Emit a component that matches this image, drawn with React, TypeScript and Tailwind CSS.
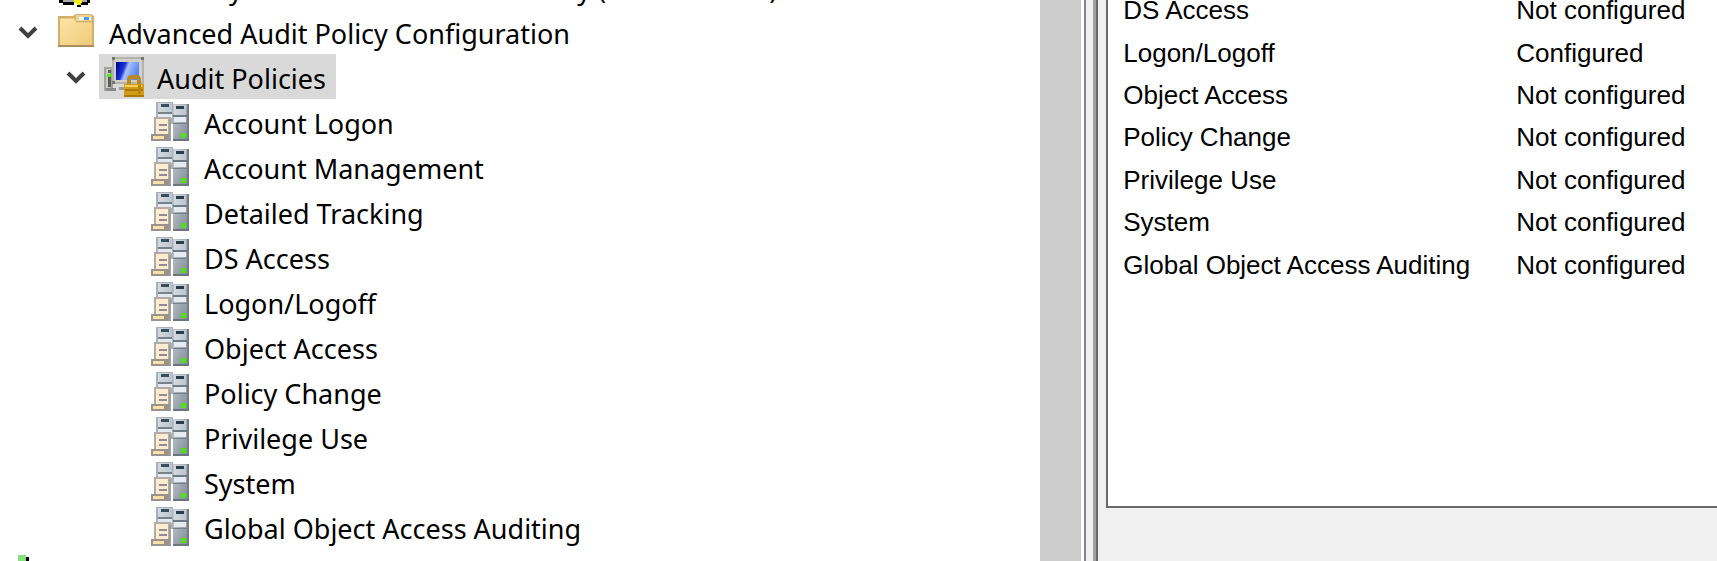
import type { ReactNode } from "react";

type Box = [number, number, number, number, string];

function Pixels({ boxes }: { boxes: Box[] }) {
  return (
    <svg viewBox="0 0 40 40" className="h-10 w-10 shrink-0" aria-hidden="true">
      {boxes.map(([x, y, w, h, fill], i) => (
        <rect key={i} x={x} y={y} width={w} height={h} fill={fill} />
      ))}
    </svg>
  );
}

function ServerIcon() {
  return (
    <svg viewBox="0 0 40 40" className="h-10 w-10 shrink-0" aria-hidden="true">
      <defs>
        <linearGradient id="cabinet" x1="0" y1="0" x2="1" y2="1">
          <stop offset="0" stopColor="#c3cad1" />
          <stop offset="1" stopColor="#7f8992" />
        </linearGradient>
        <linearGradient id="face" x1="0" y1="0" x2="1" y2="0">
          <stop offset="0" stopColor="#d3d9e0" />
          <stop offset="1" stopColor="#bcc5ce" />
        </linearGradient>
      </defs>
      <path d="M5 0h17v22H5z" fill="#a9b2ba" />
      <path d="M7 1h14v9H7z" fill="url(#face)" />
      <path d="M10 2h8v3h-8z" fill="#3a4d5a" />
      <path d="M7 10h14v2H7z" fill="#76828c" />
      <path d="M7 12h14v4H7z" fill="#e3e9ef" />
      <path d="M22 2h16v37H22z" fill="url(#cabinet)" />
      <path d="M23 3h12v10H23z" fill="url(#face)" />
      <path d="M25 4h8v3h-8z" fill="#2b3c48" />
      <path d="M22 13h14v2H22z" fill="#6e7a84" />
      <path d="M23 15h12v5H23z" fill="#e6ebf0" />
      <path d="M22 21h14v1H22z" fill="#75808a" />
      <path d="M36 2h2v37h-2z" fill="#757f88" />
      <path d="M22 37h16v2H22z" fill="#6b757d" />
      <path d="M30 31h5v5h-5z" fill="#4fe01a" />
      <path d="M3 15h17v22H3z" fill="#b3aca6" />
      <path d="M5 17h12v18H5z" fill="#fdecd0" />
      <path d="M8 22h8v2H8zM8 27h8v2H8z" fill="#928c96" />
      <path d="M0 32h18v7H0z" fill="#98938c" />
      <path d="M2 34h11v3H2z" fill="#fbe0a8" />
      <path d="M18 18h2v21h-2z" fill="#a39d97" />
    </svg>
  );
}

function FolderIcon() {
  return (
    <svg viewBox="0 0 40 40" className="h-10 w-10 shrink-0" aria-hidden="true">
      <defs>
        <linearGradient id="folder" x1="0" y1="0" x2="1" y2="1">
          <stop offset="0" stopColor="#fde5a5" />
          <stop offset="1" stopColor="#eecb7a" />
        </linearGradient>
      </defs>
      <path d="M2 4h15l3-2h15l3 2v31H2z" fill="#d3b06a" />
      <path d="M4 6h14l2 4h16V4v30H4z" fill="#e6c983" />
      <path d="M20 3h15l1 6H20z" fill="#eed596" />
      <path d="M23 5h12v3H23z" fill="#f5f8fb" />
      <path d="M28 5h5v3h-5z" fill="#4a9be0" />
      <path d="M4 7h14l3 4h15v22H4z" fill="url(#folder)" />
      <path d="M2 33h36v2H2z" fill="#ad8d5a" />
    </svg>
  );
}

function PolicyIcon() {
  return (
    <svg viewBox="0 0 40 40" className="h-10 w-10 shrink-0" aria-hidden="true">
      <defs>
        <linearGradient id="screen" x1="0" y1="0" x2="1" y2="0.3">
          <stop offset="0.1" stopColor="#0508a0" />
          <stop offset="0.4" stopColor="#1a35d8" />
          <stop offset="0.55" stopColor="#a9c2fb" />
          <stop offset="1" stopColor="#5b87f2" />
        </linearGradient>
      </defs>
      <path d="M0 10h9v24H0z" fill="#a2a39e" />
      <path d="M2 12h4v20H2z" fill="#c9cac4" />
      <path d="M4 13h3v3H4zM4 20h3v10H4z" fill="#5c5d5a" />
      <path d="M3 17h5v3H3z" fill="#55e51d" />
      <path d="M2 31h10v3H2z" fill="#898a86" />
      <path d="M8 0h32v27H8z" fill="#b4b3ac" />
      <path d="M10 2h28v23H10z" fill="#d0cfc8" />
      <path d="M8 0h3v3H8zM37 0h3v3h-3zM8 24h3v3H8z" fill="#777770" />
      <path d="M12 5h23v18H12z" fill="url(#screen)" />
      <path d="M15 30h5v3h-5z" fill="#9a9a96" />
      <path d="M25 29v-6q0-3 3-3h4q3 0 3 3v6" fill="none" stroke="#b98a22" strokeWidth="4" />
      <path d="M20 27h20v13H20z" fill="#d39c17" />
      <path d="M21 28h17v2H21z" fill="#f4cf5c" />
      <path d="M21 32h18v2H21zM20 38h20v2H20z" fill="#ad7909" />
      <path d="M34 28h3v9h-3z" fill="#b8860f" />
    </svg>
  );
}

function SecurityIcon() {
  return (
    <Pixels
      boxes={[
        [5, 30, 26, 5, "#a9a9a9"],
        [3, 33, 4, 3, "#000000"],
        [7, 35, 11, 3, "#000000"],
        [24, 35, 8, 3, "#000000"],
        [31, 33, 3, 3, "#000000"],
        [18, 32, 8, 4, "#f5ee00"],
        [21, 35, 4, 3, "#f5ee00"],
        [21, 38, 4, 2, "#000000"],
      ]}
    />
  );
}

function ScriptIcon() {
  return (
    <Pixels
      boxes={[
        [10, 3, 8, 37, "#84e07c"],
        [18, 5, 3, 35, "#000000"],
      ]}
    />
  );
}

function Chevron() {
  return (
    <svg viewBox="0 0 20 14" className="h-[14px] w-5" fill="none" stroke="#404040" strokeWidth="4" aria-hidden="true">
      <path d="M2 3l8 8 8-8" />
    </svg>
  );
}

const indent = ["pl-2", "pl-14", "pl-[103px]"];

function TreeRow({
  level,
  icon,
  label,
  open,
  selected,
}: {
  level: number;
  icon: ReactNode;
  label: string;
  open?: boolean;
  selected?: boolean;
}) {
  return (
    <li
      role="treeitem"
      aria-level={level + 1}
      aria-expanded={open}
      aria-selected={!!selected}
      className={`flex h-[45px] shrink-0 items-center ${indent[level]}`}
    >
      {open ? (
        <button type="button" aria-label={`Collapse ${label}`} className="flex w-[43px] shrink-0 justify-start pl-[10px]">
          <Chevron />
        </button>
      ) : (
        <span className="w-[43px] shrink-0" />
      )}
      <span className={`flex h-full items-center gap-[13px] whitespace-nowrap pr-[10px] pl-[5px] ${selected ? "bg-[#d9d9d9]" : ""}`}>
        {icon}
        <span className="pt-1">{label}</span>
      </span>
    </li>
  );
}

const categories = [
  "Account Logon",
  "Account Management",
  "Detailed Tracking",
  "DS Access",
  "Logon/Logoff",
  "Object Access",
  "Policy Change",
  "Privilege Use",
  "System",
  "Global Object Access Auditing",
];

const summary = [
  ["DS Access", "Not configured"],
  ["Logon/Logoff", "Configured"],
  ["Object Access", "Not configured"],
  ["Policy Change", "Not configured"],
  ["Privilege Use", "Not configured"],
  ["System", "Not configured"],
  ["Global Object Access Auditing", "Not configured"],
];

export default function App() {
  return (
    <div className="flex h-screen overflow-hidden bg-[#f0f0f0] text-black">
      <nav className="flex min-w-0 flex-[1090] border-r-2 border-[#828790] bg-white">
        <ul
          role="tree"
          className="-mt-9 flex min-w-0 flex-1 flex-col overflow-hidden font-['Noto_Sans','Open_Sans',sans-serif] text-[27px] leading-[45px]"
        >
          <TreeRow level={0} icon={<SecurityIcon />} label="IP Security Policies on Active Directory (contoso.com)" />
          <TreeRow level={0} icon={<FolderIcon />} label="Advanced Audit Policy Configuration" open />
          <TreeRow level={1} icon={<PolicyIcon />} label="Audit Policies" open selected />
          {categories.map((name) => (
            <TreeRow key={name} level={2} icon={<ServerIcon />} label={name} />
          ))}
          <li className="flex h-[45px] shrink-0 items-center pl-2">
            <ScriptIcon />
          </li>
        </ul>
        <div className="mr-[3px] w-[41px] shrink-0 bg-[#cdcdcd]" />
      </nav>
      <main className="flex min-w-0 flex-[627] pl-[7px]">
        <div className="flex min-w-0 flex-1 flex-col border-l-[3px] border-[#a0a0a0]">
          <div className="flex min-w-0 flex-1 flex-col border-l-2 border-[#696969] pl-2">
            <section className="min-h-0 flex-1 overflow-hidden border-b-2 border-l-2 border-[#696969] bg-white">
              <table className="-mt-[11px] h-[297px] w-full font-['Liberation_Sans',Arial,sans-serif] text-[26px] leading-8">
                <tbody>
                  {summary.map(([name, state]) => (
                    <tr key={name}>
                      <td className="w-[408px] whitespace-nowrap p-0 pl-[15px]">{name}</td>
                      <td className="whitespace-nowrap p-0">{state}</td>
                    </tr>
                  ))}
                </tbody>
              </table>
            </section>
            <footer className="h-[53px] shrink-0" />
          </div>
        </div>
      </main>
    </div>
  );
}
